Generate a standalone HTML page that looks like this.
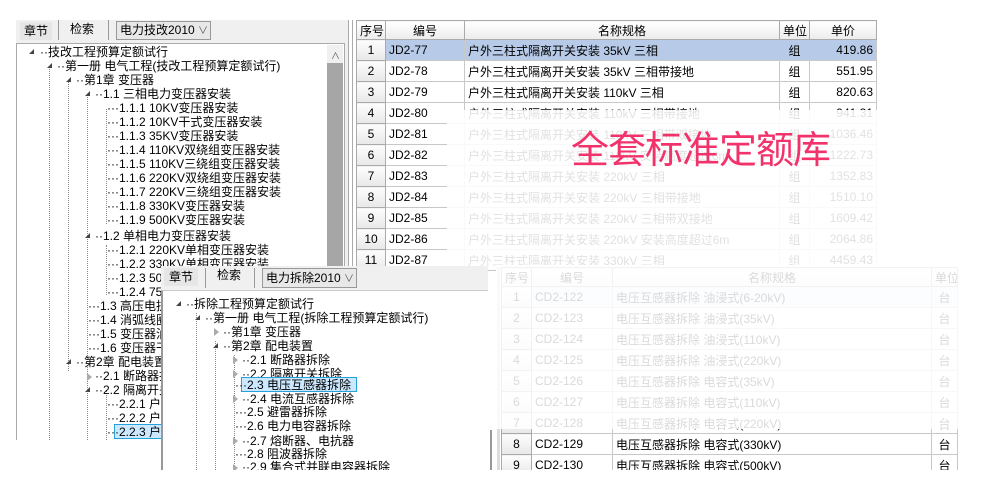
<!DOCTYPE html>
<html><head><meta charset="utf-8"><style>
*{margin:0;padding:0;box-sizing:border-box}
body{width:1000px;height:500px;background:#fff;position:relative;overflow:hidden;font-family:"Liberation Sans","Noto Sans CJK SC",sans-serif;font-size:12px;color:#000}
.a{position:absolute;white-space:nowrap}
.t{position:absolute;white-space:nowrap;line-height:14px;font-size:12px}
.tri{position:absolute;width:0;height:0;border-left:5px solid transparent;border-bottom:5px solid #444}
.otri{position:absolute;width:0;height:0;border-top:4px solid transparent;border-bottom:4px solid transparent;border-left:5px solid #aaa}
.vd{position:absolute;border-left:1px dotted #888;width:0}
table{border-collapse:collapse;table-layout:fixed}
td{border:1px solid #c8c8c8;height:21px;padding:0 3px;white-space:nowrap;overflow:hidden;font-size:12px}
td.h{background:linear-gradient(#fff,#ececec);text-align:center;height:19px;border-color:#aaa}
td.s{background:linear-gradient(#fdfdfd,#e8e8e8);text-align:center;border-color:#aaa}
.c{text-align:center}.r{text-align:right}
</style></head><body>

<div class="a" style="left:16px;top:20px;width:332px;height:420px;background:#f0f0f0"></div>
<div class="a" style="left:20px;top:22px;width:32px;height:18px;background:#e6e6e6;text-align:center;line-height:18px">章节</div>
<div class="a" style="left:58px;top:20px;width:1px;height:20px;background:#999"></div>
<div class="a" style="left:70px;top:20px;line-height:18px">检索</div>
<div class="a" style="left:108px;top:20px;width:1px;height:20px;background:#999"></div>
<div class="a" style="left:116px;top:21px;width:95px;height:19px;border:1px solid #999;background:#e8e8e8;line-height:17px;padding-left:3px">电力技改2010 <span style="color:#555;font-size:10px">∨</span></div>
<div class="a" style="left:16px;top:43px;width:329px;height:397px;background:#fff;border:1px solid #aaa;border-bottom:none"></div>
<div class="a" style="left:327px;top:45px;width:16px;height:395px;background:#f0f0f0"></div>
<div class="a" style="left:327px;top:63px;width:16px;height:240px;background:#a6a6a6"></div>
<div class="a" style="left:331px;top:49px;font-size:9px;color:#555">∧</div>
<div class="a" style="left:348px;top:20px;width:1px;height:420px;background:#aaa"></div>
<div class="a" style="left:352px;top:20px;width:1px;height:250px;background:#aaa"></div>

<div class="vd" style="left:49px;top:67px;height:373px"></div>
<div class="vd" style="left:68px;top:81px;height:290px"></div>
<div class="vd" style="left:87px;top:95px;height:345px"></div>
<div class="vd" style="left:106px;top:109px;height:115px"></div>
<div class="vd" style="left:106px;top:245px;height:50px"></div>
<div class="vd" style="left:87px;top:375px;height:65px"></div>
<div class="vd" style="left:106px;top:390px;height:50px"></div>

<div class="tri" style="left:29px;top:49px"></div><div class="t" style="left:40px;top:45px">··技改工程预算定额试行</div>
<div class="tri" style="left:47px;top:63px"></div><div class="t" style="left:57px;top:59px">··第一册 电气工程(技改工程预算定额试行)</div>
<div class="tri" style="left:66px;top:77px"></div><div class="t" style="left:76px;top:73px">··第1章 变压器</div>
<div class="tri" style="left:85px;top:91px"></div><div class="t" style="left:95px;top:87px">··1.1 三相电力变压器安装</div>
<div class="t" style="left:107px;top:101px">···1.1.1 10KV变压器安装</div>
<div class="t" style="left:107px;top:115px">···1.1.2 10KV干式变压器安装</div>
<div class="t" style="left:107px;top:129px">···1.1.3 35KV变压器安装</div>
<div class="t" style="left:107px;top:143px">···1.1.4 110KV双绕组变压器安装</div>
<div class="t" style="left:107px;top:157px">···1.1.5 110KV三绕组变压器安装</div>
<div class="t" style="left:107px;top:171px">···1.1.6 220KV双绕组变压器安装</div>
<div class="t" style="left:107px;top:185px">···1.1.7 220KV三绕组变压器安装</div>
<div class="t" style="left:107px;top:199px">···1.1.8 330KV变压器安装</div>
<div class="t" style="left:107px;top:213px">···1.1.9 500KV变压器安装</div>
<div class="tri" style="left:85px;top:233px"></div><div class="t" style="left:95px;top:229px">··1.2 单相电力变压器安装</div>
<div class="t" style="left:107px;top:243px">···1.2.1 220KV单相变压器安装</div>
<div class="t" style="left:107px;top:257px">···1.2.2 330KV单相变压器安装</div>
<div class="t" style="left:107px;top:271px">···1.2.3 500KV</div>
<div class="t" style="left:107px;top:285px">···1.2.4 750</div>
<div class="t" style="left:88px;top:299px">···1.3 高压电抗</div>
<div class="t" style="left:88px;top:313px">···1.4 消弧线圈</div>
<div class="t" style="left:88px;top:327px">···1.5 变压器油</div>
<div class="t" style="left:88px;top:341px">···1.6 变压器干</div>
<div class="tri" style="left:66px;top:359px"></div><div class="t" style="left:76px;top:355px">··第2章 配电装置</div>
<div class="otri" style="left:87px;top:373px"></div><div class="t" style="left:95px;top:369px">··2.1 断路器拆</div>
<div class="tri" style="left:85px;top:387px"></div><div class="t" style="left:95px;top:383px">··2.2 隔离开关</div>
<div class="t" style="left:107px;top:397px">···2.2.1 户</div>
<div class="t" style="left:107px;top:411px">···2.2.2 户</div>
<div class="a" style="left:114px;top:424px;width:50px;height:15px;background:#cce8ff;border:1px solid #26a0da"></div>
<div class="t" style="left:107px;top:425px">···2.2.3 户</div>

<div class="a" style="left:356px;top:20px">
<table style="width:520px">
<col style="width:29px"><col style="width:79px"><col style="width:315px"><col style="width:30px"><col style="width:67px">
<tr><td class="h">序号</td><td class="h">编号</td><td class="h">名称规格</td><td class="h">单位</td><td class="h">单价</td></tr>
<tr style="background:#b7cbe8"><td class="s">1</td><td>JD2-77</td><td>户外三柱式隔离开关安装 35kV 三相</td><td class="c">组</td><td class="r">419.86</td></tr>
<tr><td class="s">2</td><td>JD2-78</td><td>户外三柱式隔离开关安装 35kV 三相带接地</td><td class="c">组</td><td class="r">551.95</td></tr>
<tr><td class="s">3</td><td>JD2-79</td><td>户外三柱式隔离开关安装 110kV 三相</td><td class="c">组</td><td class="r">820.63</td></tr>
<tr><td class="s">4</td><td>JD2-80</td><td>户外三柱式隔离开关安装 110kV 三相带接地</td><td class="c">组</td><td class="r">941.31</td></tr>
<tr><td class="s">5</td><td>JD2-81</td><td>户外三柱式隔离开关安装 110kV 三相带双接地</td><td class="c">组</td><td class="r">1036.46</td></tr>
<tr><td class="s">6</td><td>JD2-82</td><td>户外三柱式隔离开关安装 110kV 安装高度超过6m</td><td class="c">组</td><td class="r">1222.73</td></tr>
<tr><td class="s">7</td><td>JD2-83</td><td>户外三柱式隔离开关安装 220kV 三相</td><td class="c">组</td><td class="r">1352.83</td></tr>
<tr><td class="s">8</td><td>JD2-84</td><td>户外三柱式隔离开关安装 220kV 三相带接地</td><td class="c">组</td><td class="r">1510.10</td></tr>
<tr><td class="s">9</td><td>JD2-85</td><td>户外三柱式隔离开关安装 220kV 三相带双接地</td><td class="c">组</td><td class="r">1609.42</td></tr>
<tr><td class="s">10</td><td>JD2-86</td><td>户外三柱式隔离开关安装 220kV 安装高度超过6m</td><td class="c">组</td><td class="r">2064.86</td></tr>
<tr><td class="s">11</td><td>JD2-87</td><td>户外三柱式隔离开关安装 330kV 三相</td><td class="c">组</td><td class="r">4459.43</td></tr>
</table></div>
<div class="a" style="left:447px;top:110px;width:432px;height:160px;background:rgba(255,255,255,0.88)"></div>
<div class="a" style="left:571px;top:124px;font-size:38px;line-height:46px;color:#f2336b;font-family:'Noto Sans CJK SC',sans-serif;letter-spacing:-1px">全套标准定额库</div>

<div class="a" style="left:496px;top:265px;width:470px;height:210px;background:#fff"></div>
<div class="a" style="left:497px;top:267px;width:3px;height:203px;background:#ddd"></div>
<div class="a" style="left:501px;top:267px;height:203px;overflow:hidden">
<table style="width:456px">
<col style="width:30px"><col style="width:81px"><col style="width:319px"><col style="width:26px">
<tr><td class="h">序号</td><td class="h">编号</td><td class="h">名称规格</td><td class="h">单位</td></tr>
<tr style="background:#e8eef8"><td class="s">1</td><td>CD2-122</td><td>电压互感器拆除 油浸式(6-20kV)</td><td class="c">台</td></tr>
<tr><td class="s">2</td><td>CD2-123</td><td>电压互感器拆除 油浸式(35kV)</td><td class="c">台</td></tr>
<tr><td class="s">3</td><td>CD2-124</td><td>电压互感器拆除 油浸式(110kV)</td><td class="c">台</td></tr>
<tr><td class="s">4</td><td>CD2-125</td><td>电压互感器拆除 油浸式(220kV)</td><td class="c">台</td></tr>
<tr><td class="s">5</td><td>CD2-126</td><td>电压互感器拆除 电容式(35kV)</td><td class="c">台</td></tr>
<tr><td class="s">6</td><td>CD2-127</td><td>电压互感器拆除 电容式(110kV)</td><td class="c">台</td></tr>
<tr><td class="s">7</td><td>CD2-128</td><td>电压互感器拆除 电容式(220kV)</td><td class="c">台</td></tr>
<tr><td class="s">8</td><td>CD2-129</td><td>电压互感器拆除 电容式(330kV)</td><td class="c">台</td></tr>
<tr><td class="s">9</td><td>CD2-130</td><td>电压互感器拆除 电容式(500kV)</td><td class="c">台</td></tr>
</table></div>
<div class="a" style="left:496px;top:265px;width:470px;height:164px;background:rgba(255,255,255,0.85)"></div>

<div class="a" style="left:161px;top:266px;width:327px;height:24px;background:#f0f0f0"></div>
<div class="a" style="left:164px;top:268px;width:34px;height:18px;background:#e6e6e6;text-align:center;line-height:18px">章节</div>
<div class="a" style="left:205px;top:268px;width:1px;height:20px;background:#999"></div>
<div class="a" style="left:217px;top:266px;line-height:18px">检索</div>
<div class="a" style="left:254px;top:268px;width:1px;height:20px;background:#999"></div>
<div class="a" style="left:262px;top:268px;width:95px;height:20px;border:1px solid #999;background:#e8e8e8;line-height:18px;padding-left:3px">电力拆除2010 <span style="color:#555;font-size:10px">∨</span></div>
<div class="a" style="left:161px;top:290px;width:327px;height:180px;background:#fff;border-left:2px solid #999;border-top:1px solid #ccc"></div>
<div class="vd" style="left:196px;top:313px;height:157px"></div>
<div class="vd" style="left:215px;top:341px;height:129px"></div>
<div class="vd" style="left:234px;top:355px;height:115px"></div>
<div class="tri" style="left:176px;top:301px"></div><div class="t" style="left:186px;top:297px">··拆除工程预算定额试行</div>
<div class="tri" style="left:195px;top:315px"></div><div class="t" style="left:205px;top:311px">··第一册 电气工程(拆除工程预算定额试行)</div>
<div class="otri" style="left:214px;top:328px"></div><div class="t" style="left:223px;top:325px">··第1章 变压器</div>
<div class="tri" style="left:213px;top:343px"></div><div class="t" style="left:223px;top:339px">··第2章 配电装置</div>
<div class="otri" style="left:233px;top:356px"></div><div class="t" style="left:242px;top:353px">··2.1 断路器拆除</div>
<div class="otri" style="left:233px;top:370px"></div><div class="t" style="left:242px;top:367px">··2.2 隔离开关拆除</div>
<div class="a" style="left:241px;top:377px;width:116px;height:15px;background:#cce8ff;border:1px solid #26a0da"></div>
<div class="t" style="left:235px;top:378px">···2.3 电压互感器拆除</div>
<div class="otri" style="left:233px;top:395px"></div><div class="t" style="left:242px;top:392px">··2.4 电流互感器拆除</div>
<div class="t" style="left:235px;top:405px">···2.5 避雷器拆除</div>
<div class="t" style="left:235px;top:419px">···2.6 电力电容器拆除</div>
<div class="otri" style="left:233px;top:437px"></div><div class="t" style="left:242px;top:434px">··2.7 熔断器、电抗器</div>
<div class="t" style="left:235px;top:447px">···2.8 阻波器拆除</div>
<div class="otri" style="left:233px;top:464px"></div><div class="t" style="left:242px;top:460px">··2.9 集合式并联电容器拆除</div>
<div class="a" style="left:490px;top:430px;width:2px;height:40px;background:#999"></div>
<div class="a" style="left:0;top:470px;width:1000px;height:30px;background:#fff"></div>
</body></html>
